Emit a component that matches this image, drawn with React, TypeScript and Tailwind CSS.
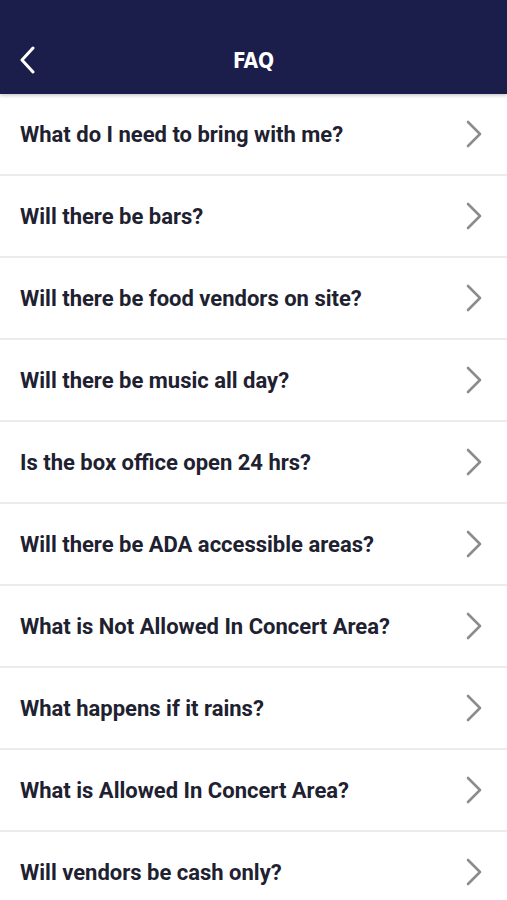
const QUESTIONS = [
  'What do I need to bring with me?',
  'Will there be bars?',
  'Will there be food vendors on site?',
  'Will there be music all day?',
  'Is the box office open 24 hrs?',
  'Will there be ADA accessible areas?',
  'What is Not Allowed In Concert Area?',
  'What happens if it rains?',
  'What is Allowed In Concert Area?',
  'Will vendors be cash only?',
];

export default function App() {
  return (
    <div className="w-[507px] h-[900px] overflow-hidden bg-white" style={{ fontFamily: 'Roboto, "Liberation Sans", sans-serif' }}>
      {/* Header */}
      <div className="relative z-10 h-[94px] bg-[#1b1d4b] shadow-[0_2px_3px_rgba(0,0,0,0.18)]">
        <div className="h-[36px]" />
        <div className="relative flex items-center justify-center h-[48px]">
          <button className="absolute left-[18px] top-[10px] text-white" aria-label="Back">
            <svg width="20" height="28" viewBox="0 0 20 28" fill="none" stroke="currentColor" strokeWidth={3} strokeLinecap="round" strokeLinejoin="round">
              <path d="M15 2 L4 14 L15 26" />
            </svg>
          </button>
          <h1
            className="mt-[3px] text-white text-[21px] font-bold"
            style={{ fontFamily: '"Liberation Sans Narrow", "DejaVu Sans Condensed", sans-serif' }}
          >
            FAQ
          </h1>
        </div>
      </div>

      {/* Question list */}
      <ul>
        {QUESTIONS.map((q) => (
          <li
            key={q}
            className="flex items-center justify-between h-[82px] pl-[20px] pr-[22px] border-b-2 border-[#ebebeb]"
          >
            <span className="text-[22px] font-bold text-[#1e2130]">{q}</span>
            <svg width="20" height="28" viewBox="0 0 20 28" fill="none" stroke="#8c8c8c" strokeWidth={2.6} strokeLinecap="round" strokeLinejoin="round">
              <path d="M3 2 L15 14 L3 26" />
            </svg>
          </li>
        ))}
      </ul>
    </div>
  );
}
